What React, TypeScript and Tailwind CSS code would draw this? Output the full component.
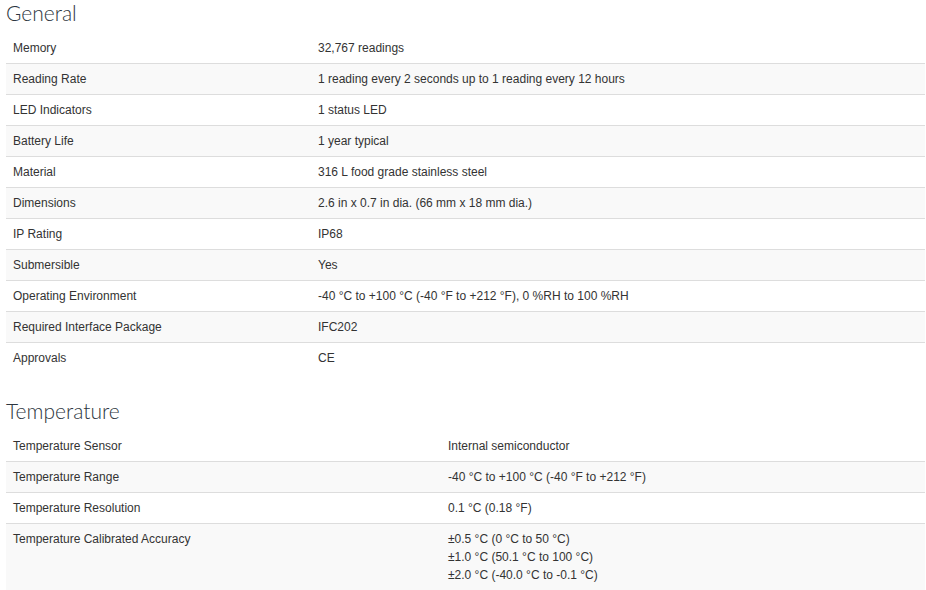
import React from 'react';

type Row = { label: string; value: string[] };

const general: Row[] = [
  { label: 'Memory', value: ['32,767 readings'] },
  { label: 'Reading Rate', value: ['1 reading every 2 seconds up to 1 reading every 12 hours'] },
  { label: 'LED Indicators', value: ['1 status LED'] },
  { label: 'Battery Life', value: ['1 year typical'] },
  { label: 'Material', value: ['316 L food grade stainless steel'] },
  { label: 'Dimensions', value: ['2.6 in x 0.7 in dia. (66 mm x 18 mm dia.)'] },
  { label: 'IP Rating', value: ['IP68'] },
  { label: 'Submersible', value: ['Yes'] },
  { label: 'Operating Environment', value: ['-40 °C to +100 °C (-40 °F to +212 °F), 0 %RH to 100 %RH'] },
  { label: 'Required Interface Package', value: ['IFC202'] },
  { label: 'Approvals', value: ['CE'] },
];

const temperature: Row[] = [
  { label: 'Temperature Sensor', value: ['Internal semiconductor'] },
  { label: 'Temperature Range', value: ['-40 °C to +100 °C (-40 °F to +212 °F)'] },
  { label: 'Temperature Resolution', value: ['0.1 °C (0.18 °F)'] },
  {
    label: 'Temperature Calibrated Accuracy',
    value: ['±0.5 °C (0 °C to 50 °C)', '±1.0 °C (50.1 °C to 100 °C)', '±2.0 °C (-40.0 °C to -0.1 °C)'],
  },
];

const SpecTable: React.FC<{ title: string; rows: Row[]; cols: string }> = ({ title, rows, cols }) => (
  <section>
    <h3 className="pl-[6px] mb-[8px] text-[21px] leading-[24px] font-light text-[#2d3640] font-['Lato',sans-serif]">
      {title}
    </h3>
    <div className="w-[919px] ml-[6px]">
      {rows.map((row, i) => (
        <div
          key={row.label}
          className={`grid ${cols} ${i === 0 ? '' : 'border-t border-[#dddddd]'} ${i % 2 === 1 ? 'bg-[#f9f9f9]' : 'bg-white'}`}
        >
          <div className="px-[7px] py-[6px]">{row.label}</div>
          <div className="px-[7px] py-[6px]">
            {row.value.map((v) => (
              <div key={v}>{v}</div>
            ))}
          </div>
        </div>
      ))}
    </div>
  </section>
);

export default function App() {
  return (
    <div className="w-[926px] h-[590px] overflow-hidden bg-white pt-[1px] text-[12px] leading-[18px] text-[#333333] font-['Liberation_Sans',Arial,sans-serif]">
      <SpecTable title="General" rows={general} cols="grid-cols-[305px_1fr]" />
      <div className="mt-[26px]">
        <SpecTable title="Temperature" rows={temperature} cols="grid-cols-[435px_1fr]" />
      </div>
    </div>
  );
}
